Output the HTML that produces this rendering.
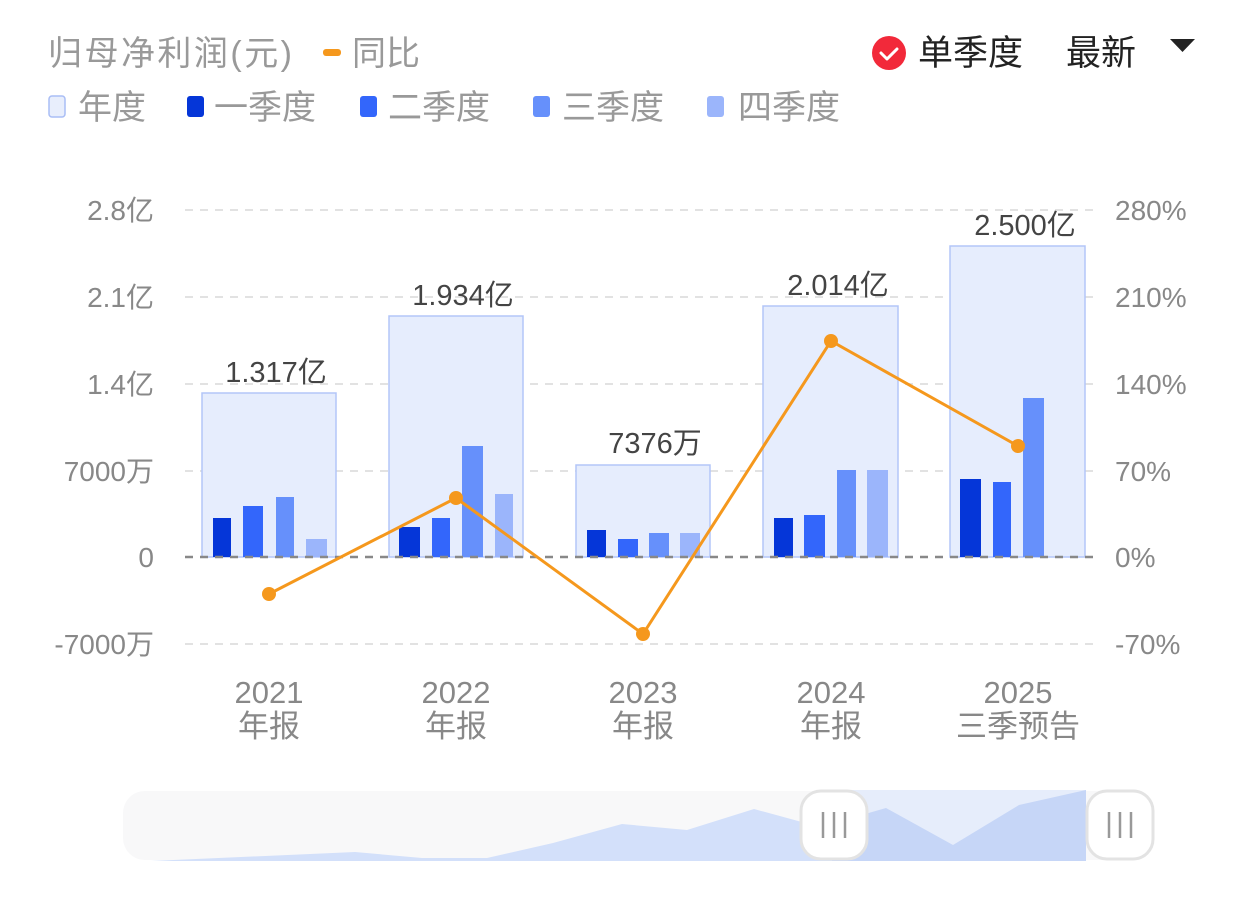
<!DOCTYPE html>
<html><head><meta charset="utf-8"><style>
html,body{margin:0;padding:0;background:#fff;width:1242px;height:898px;overflow:hidden}
svg{display:block;font-family:"Liberation Sans","Noto Sans CJK SC",sans-serif}
</style></head><body>
<svg width="1242" height="898" viewBox="0 0 1242 898">
<text x="48" y="65" font-size="34" fill="#999" textLength="244">归母净利润(元)</text>
<rect x="323" y="49" width="18" height="7" rx="3" fill="#f5981d"/>
<text x="352" y="65" font-size="34" fill="#999">同比</text>
<rect x="49" y="96" width="16" height="21" rx="3" fill="#e8eefc" stroke="#a9bdf5" stroke-width="1.5"/>
<text x="78" y="119" font-size="34" fill="#999">年度</text>
<rect x="187" y="96" width="17" height="21" rx="3" fill="#0536d8"/>
<text x="214" y="119" font-size="34" fill="#999">一季度</text>
<rect x="360" y="96" width="17" height="21" rx="3" fill="#3366fb"/>
<text x="388" y="119" font-size="34" fill="#999">二季度</text>
<rect x="533" y="96" width="17" height="21" rx="3" fill="#6690fb"/>
<text x="562" y="119" font-size="34" fill="#999">三季度</text>
<rect x="707" y="96" width="17" height="21" rx="3" fill="#9bb5fb"/>
<text x="738" y="119" font-size="34" fill="#999">四季度</text>
<circle cx="889" cy="53" r="17" fill="#f2293a"/>
<path d="M881 53 l6 6 l10 -10" stroke="#fff" stroke-width="3" fill="none" stroke-linecap="round" stroke-linejoin="round"/>
<text x="918" y="65" font-size="35" fill="#222">单季度</text>
<text x="1066" y="65" font-size="35" fill="#222">最新</text>
<path d="M1170 39 h25 l-12.5 13 z" fill="#222"/>
<g stroke="#e2e2e2" stroke-width="2" stroke-dasharray="8 7">
<line x1="185" y1="210" x2="1100" y2="210"/><line x1="185" y1="297" x2="1100" y2="297"/>
<line x1="185" y1="384" x2="1100" y2="384"/><line x1="185" y1="471" x2="1100" y2="471"/>
<line x1="185" y1="644" x2="1100" y2="644"/>
</g>
<g font-size="28" fill="#888" text-anchor="end">
<text x="154" y="220">2.8亿</text><text x="154" y="307">2.1亿</text><text x="154" y="394">1.4亿</text>
<text x="154" y="481">7000万</text><text x="154" y="567">0</text><text x="154" y="654">-7000万</text>
</g>
<g font-size="28" fill="#888">
<text x="1115" y="220">280%</text><text x="1115" y="307">210%</text><text x="1115" y="394">140%</text>
<text x="1115" y="481">70%</text><text x="1115" y="567">0%</text><text x="1115" y="654">-70%</text>
</g>
<g fill="#e6edfd" stroke="#b3c6f8" stroke-width="1.5">
<rect x="202" y="393" width="134" height="164"/><rect x="389" y="316" width="134" height="241"/>
<rect x="576" y="465" width="134" height="92"/><rect x="763" y="306" width="135" height="251"/>
<rect x="950" y="246" width="135" height="311"/>
</g>
<g>
<rect x="213" y="518" width="18" height="39" fill="#0536d8"/><rect x="243" y="506" width="20" height="51" fill="#3366fb"/><rect x="276" y="497" width="18" height="60" fill="#6690fb"/><rect x="306" y="539" width="21" height="18" fill="#9bb5fb"/>
<rect x="399" y="527" width="21" height="30" fill="#0536d8"/><rect x="432" y="518" width="18" height="39" fill="#3366fb"/><rect x="462" y="446" width="21" height="111" fill="#6690fb"/><rect x="495" y="494" width="18" height="63" fill="#9bb5fb"/>
<rect x="587" y="530" width="19" height="27" fill="#0536d8"/><rect x="618" y="539" width="20" height="18" fill="#3366fb"/><rect x="649" y="533" width="20" height="24" fill="#6690fb"/><rect x="680" y="533" width="20" height="24" fill="#9bb5fb"/>
<rect x="774" y="518" width="19" height="39" fill="#0536d8"/><rect x="804" y="515" width="21" height="42" fill="#3366fb"/><rect x="837" y="470" width="19" height="87" fill="#6690fb"/><rect x="867" y="470" width="21" height="87" fill="#9bb5fb"/>
<rect x="960" y="479" width="21" height="78" fill="#0536d8"/><rect x="993" y="482" width="18" height="75" fill="#3366fb"/><rect x="1023" y="398" width="21" height="159" fill="#6690fb"/>
</g>
<line x1="185" y1="557" x2="1100" y2="557" stroke="#888" stroke-width="2.5" stroke-dasharray="8 7"/>
<g font-size="29" fill="#444" text-anchor="middle">
<text x="276" y="382">1.317亿</text><text x="463" y="305">1.934亿</text><text x="655" y="453">7376万</text>
<text x="838" y="295">2.014亿</text><text x="1025" y="235">2.500亿</text>
</g>
<polyline points="269,594 456,498 643,634 831,341 1018,446" fill="none" stroke="#f5981d" stroke-width="3"/>
<g fill="#f5981d"><circle cx="269" cy="594" r="7"/><circle cx="456" cy="498" r="7"/><circle cx="643" cy="634" r="7"/><circle cx="831" cy="341" r="7"/><circle cx="1018" cy="446" r="7"/></g>
<g font-size="31" fill="#888" text-anchor="middle">
<text x="269" y="703">2021</text><text x="269" y="737">年报</text>
<text x="456" y="703">2022</text><text x="456" y="737">年报</text>
<text x="643" y="703">2023</text><text x="643" y="737">年报</text>
<text x="831" y="703">2024</text><text x="831" y="737">年报</text>
<text x="1018" y="703">2025</text><text x="1018" y="737">三季预告</text>
</g>
<rect x="123" y="791" width="1030" height="69" rx="22" fill="#f8f8f9"/>
<rect x="832" y="790" width="254" height="70" fill="#e6edfb"/>
<clipPath id="c1"><rect x="0" y="0" width="832" height="898"/></clipPath>
<clipPath id="c2"><rect x="832" y="0" width="254" height="898"/></clipPath>
<polygon clip-path="url(#c1)" points="151,861 355,852 422,858 487,858 553,843 622,824 687,830 754,809 820,827 886,808 953,845 1019,805 1086,790 1086,861" fill="#d3e0fa"/>
<polygon clip-path="url(#c2)" points="151,861 355,852 422,858 487,858 553,843 622,824 687,830 754,809 820,827 886,808 953,845 1019,805 1086,790 1086,861" fill="#c6d6f7"/>
<g fill="#fff" stroke="#e3e3e3" stroke-width="3">
<rect x="801" y="791" width="66" height="68" rx="20"/><rect x="1087" y="791" width="66" height="68" rx="20"/>
</g>
<g stroke="#999" stroke-width="2.5">
<line x1="823" y1="812" x2="823" y2="838"/><line x1="834" y1="812" x2="834" y2="838"/><line x1="845" y1="812" x2="845" y2="838"/>
<line x1="1109" y1="812" x2="1109" y2="838"/><line x1="1120" y1="812" x2="1120" y2="838"/><line x1="1131" y1="812" x2="1131" y2="838"/>
</g>
</svg>
</body></html>
